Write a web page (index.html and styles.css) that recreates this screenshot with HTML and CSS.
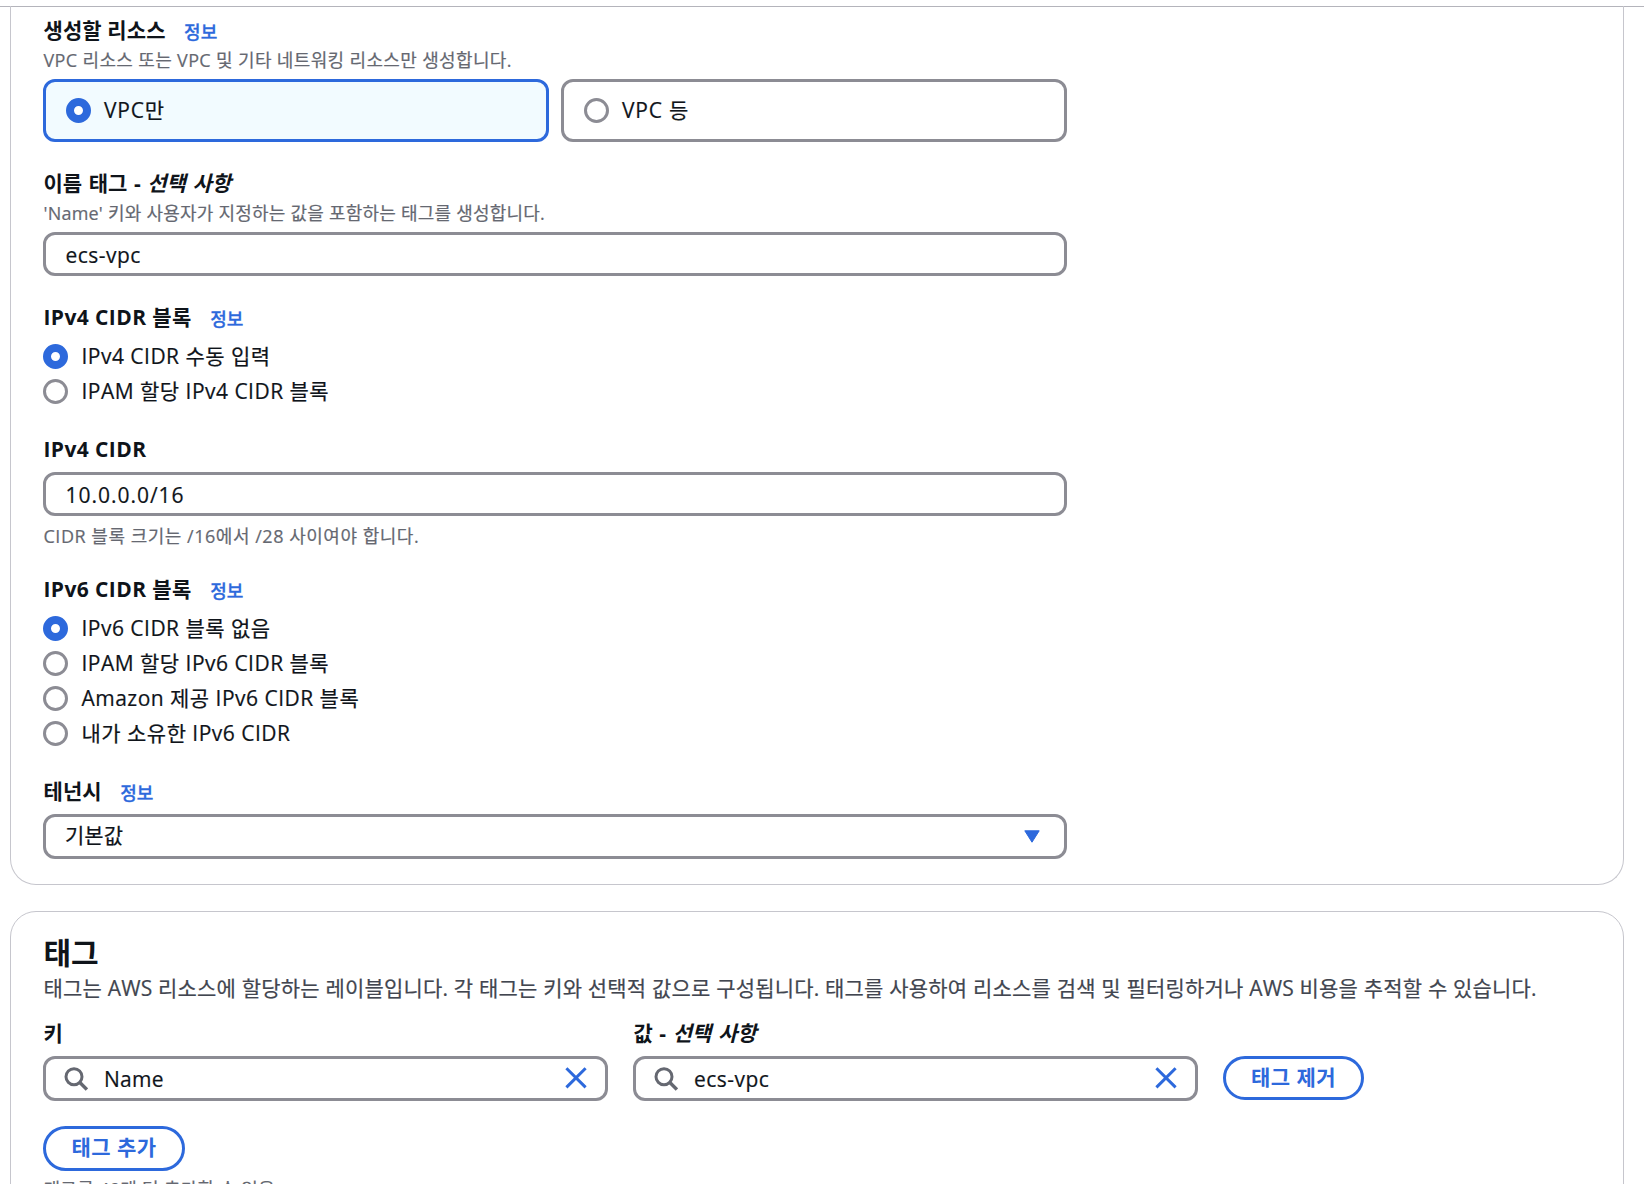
FILE: index.html
```html
<!DOCTYPE html>
<html lang="ko">
<head>
<meta charset="utf-8">
<title>VPC 생성</title>
<link rel="stylesheet" href="styles.css">
</head>
<body>
<main class="page">
  <section class="card card-settings">
    <div class="field">
      <div class="label"><span class="t-resource">생성할 리소스</span><a class="info">정보</a></div>
      <div class="desc under-label"><span class="t-resource-desc">VPC 리소스 또는 VPC 및 기타 네트워킹 리소스만 생성합니다.</span></div>
      <div class="tiles">
        <label class="tile selected"><i class="radio on"></i><span class="t-tile">VPC만</span></label>
        <label class="tile"><i class="radio"></i><span class="t-tile">VPC 등</span></label>
      </div>
    </div>
    <div class="field field-name">
      <div class="label"><span class="t-optional">이름 태그 - <em>선택 사항</em></span></div>
      <div class="desc under-label"><span class="t-name-desc">'Name' 키와 사용자가 지정하는 값을 포함하는 태그를 생성합니다.</span></div>
      <div class="input"><span class="t-mixed">ecs-vpc</span></div>
    </div>
    <div class="field field-v4">
      <div class="label"><span class="t-block">IPv4 CIDR 블록</span><a class="info">정보</a></div>
      <div class="radios">
        <label class="option"><i class="radio on"></i><span class="t-mixed">IPv4 CIDR 수동 입력</span></label>
        <label class="option"><i class="radio"></i><span class="t-mixed">IPAM 할당 IPv4 CIDR 블록</span></label>
      </div>
    </div>
    <div class="field field-cidr">
      <div class="label"><span class="t-block">IPv4 CIDR</span></div>
      <div class="input"><span class="t-addr">10.0.0.0/16</span></div>
      <div class="desc hint"><span class="t-hint">CIDR 블록 크기는 /16에서 /28 사이여야 합니다.</span></div>
    </div>
    <div class="field field-v6">
      <div class="label"><span class="t-block">IPv6 CIDR 블록</span><a class="info">정보</a></div>
      <div class="radios">
        <label class="option"><i class="radio on"></i><span class="t-mixed">IPv6 CIDR 블록 없음</span></label>
        <label class="option"><i class="radio"></i><span class="t-mixed">IPAM 할당 IPv6 CIDR 블록</span></label>
        <label class="option"><i class="radio"></i><span class="t-mixed">Amazon 제공 IPv6 CIDR 블록</span></label>
        <label class="option"><i class="radio"></i><span class="t-mixed">내가 소유한 IPv6 CIDR</span></label>
      </div>
    </div>
    <div class="field field-tenancy">
      <div class="label"><span class="t-resource">테넌시</span><a class="info">정보</a></div>
      <div class="input select"><span>기본값</span>
        <svg class="caret" viewBox="0 0 16 13"><path d="M.8 .8h14.4L8 12.2z" fill="#2d69dc" stroke="#2d69dc" stroke-width="1" stroke-linejoin="round"/></svg>
      </div>
    </div>
  </section>

  <section class="card card-tags">
    <h2 class="title">태그</h2>
    <p class="intro">태그는 AWS 리소스에 할당하는 레이블입니다. 각 태그는 키와 선택적 값으로 구성됩니다. 태그를 사용하여 리소스를 검색 및 필터링하거나 AWS 비용을 추적할 수 있습니다.</p>
    <div class="tagrow">
      <div class="tagcol">
        <div class="label"><span>키</span></div>
        <div class="input search">
          <svg class="lens" viewBox="0 0 24 24"><circle cx="10" cy="9.7" r="8" fill="none" stroke="#656871" stroke-width="3"/><path d="M15.6 15.3l7.3 7.3" stroke="#656871" stroke-width="3.4"/></svg>
          <span class="t-key">Name</span>
          <svg class="clear" viewBox="0 0 22 22"><path d="M1.4 1.2l19.2 19.2M20.6 1.2L1.4 20.4" stroke="#2d69dc" stroke-width="3"/></svg>
        </div>
      </div>
      <div class="tagcol">
        <div class="label"><span class="t-optional">값 - <em>선택 사항</em></span></div>
        <div class="input search">
          <svg class="lens" viewBox="0 0 24 24"><circle cx="10" cy="9.7" r="8" fill="none" stroke="#656871" stroke-width="3"/><path d="M15.6 15.3l7.3 7.3" stroke="#656871" stroke-width="3.4"/></svg>
          <span class="t-mixed">ecs-vpc</span>
          <svg class="clear" viewBox="0 0 22 22"><path d="M1.4 1.2l19.2 19.2M20.6 1.2L1.4 20.4" stroke="#2d69dc" stroke-width="3"/></svg>
        </div>
      </div>
      <button class="btn btn-remove">태그 제거</button>
    </div>
    <button class="btn btn-add">태그 추가</button>
    <div class="desc limit"><span class="t-limit">태그를 49개 더 추가할 수 있음.</span></div>
  </section>
</main>
</body>
</html>
```
FILE: styles.css
```css
* { box-sizing: border-box; }
html { overflow: hidden; background: #fff; }
body {
  margin: 0;
  font-family: "Open Sans", "Noto Sans CJK KR", sans-serif;
  font-size: 21px;
  color: #0f141a;
  -webkit-text-stroke: .2px currentColor;
}
.page {
  height: 1184px;
  padding-top: 6px;
  overflow: hidden;
  display: flex;
  flex-direction: column;
  gap: 26px;
}
.page::before {
  content: "";
  flex: none;
  height: 1px;
  margin-bottom: -27px;
  background: #b4b4bb;
}
.card {
  flex: none;
  width: 1614px;
  margin-left: 10px;
  border: 1px solid #c6c6cd;
  padding: 0 32px;
}
.card-settings {
  height: 879px;
  border-top: 0;
  border-radius: 0 0 26px 26px;
  padding-top: 9px;
}
.card-tags {
  height: 400px;
  border-radius: 26px 26px 0 0;
  padding-top: 23px;
}
.label {
  display: flex;
  align-items: center;
  height: 28px;
  padding-left: .5px;
  font-weight: 700;
  white-space: nowrap;
  -webkit-text-stroke: 0;
}
.label em { font-style: oblique; }
.info {
  margin: 3px 0 0 18.5px;
  font-size: 18px;
  font-weight: 500;
  color: #2d69dc;
  -webkit-text-stroke: .3px #2d69dc;
}
.desc {
  height: 28px;
  padding-left: .5px;
  line-height: 28px;
  font-size: 18px;
  color: #656871;
  white-space: nowrap;
}
.under-label { margin-top: 3px; }
.field { width: 1024px; }
.field-name { margin-top: 26px; }
.field-v4 { margin-top: 26px; }
.field-cidr { margin-top: 31px; }
.field-v6 { margin-top: 24px; }
.field-tenancy { margin-top: 30px; }
.tiles {
  display: grid;
  grid-template-columns: 1fr 1fr;
  gap: 12px;
  margin-top: 5px;
}
.tile {
  display: flex;
  align-items: flex-start;
  gap: 13px;
  height: 63px;
  padding: 16px 20px;
  border: 3px solid #8c8c94;
  border-radius: 12px;
  line-height: 25px;
}
.tile.selected { border-color: #2d69dc; background: #f2fbff; }
.radio {
  flex: none;
  width: 25px;
  height: 25px;
  border: 3px solid #8c8c94;
  border-radius: 50%;
  background: #fff;
}
.radio.on { border: 8px solid #2d69dc; }
.input {
  display: flex;
  align-items: center;
  height: 44px;
  padding: 2px 20px 0 19.5px;
  border: 3px solid #8c8c94;
  border-radius: 12px;
  margin-top: 5px;
}
.radios { display: grid; gap: 10px; margin-top: 14px; }
.option {
  display: flex;
  align-items: center;
  gap: 13.5px;
  height: 25px;
  line-height: 25px;
  white-space: nowrap;
}
.field-cidr .input { margin-top: 9px; }
.hint { margin-top: 6px; }
.select {
  height: 45px;
  justify-content: space-between;
  margin-top: 10px;
  padding: 0 20px 5px 19px;
}
.caret { width: 16px; height: 13px; margin: 5px 4px 0 0; }
.title {
  margin: 0;
  height: 36px;
  padding-left: .5px;
  line-height: 36px;
  font-size: 30px;
  font-weight: 700;
  -webkit-text-stroke: 0;
}
.intro {
  margin: 3px 0 0;
  height: 28px;
  padding-left: .5px;
  line-height: 28px;
  letter-spacing: .19px;
  color: #424650;
  white-space: nowrap;
}
.tagrow {
  display: grid;
  grid-template-columns: 565px 565px auto;
  justify-content: start;
  align-items: end;
  gap: 25px;
  margin-top: 16px;
}
.search { height: 45px; margin-top: 10px; padding: 0 18px; }
.lens { width: 24px; height: 24px; margin-right: 16px; }
.clear { width: 22px; height: 22px; margin: 0 0 1px auto; }
.btn {
  display: flex;
  align-items: center;
  justify-content: center;
  height: 44px;
  border: 3px solid #2d69dc;
  border-radius: 22px;
  padding: 0 0 2px;
  background: #fff;
  color: #2d69dc;
  font: 700 21px/1 "Open Sans", "Noto Sans CJK KR", sans-serif;
  letter-spacing: .45px;
  -webkit-text-stroke: 0;
}
.btn-remove { width: 141px; margin-bottom: 1px; }
.btn-add { width: 142px; height: 45px; margin-top: 25px; border-radius: 23px; }
.limit { margin-top: 4px; }

.t-resource { letter-spacing: .1px; }
.t-resource-desc { letter-spacing: .35px; }
.t-name-desc { letter-spacing: .22px; }
.t-tile { letter-spacing: .8px; }
.t-optional { word-spacing: 1.1px; }
.t-mixed { letter-spacing: .48px; }
.t-block { letter-spacing: .4px; }
.t-addr { letter-spacing: .98px; }
.t-hint { letter-spacing: .52px; }
.t-key { letter-spacing: .3px; }
.t-limit { letter-spacing: .3px; }
```
